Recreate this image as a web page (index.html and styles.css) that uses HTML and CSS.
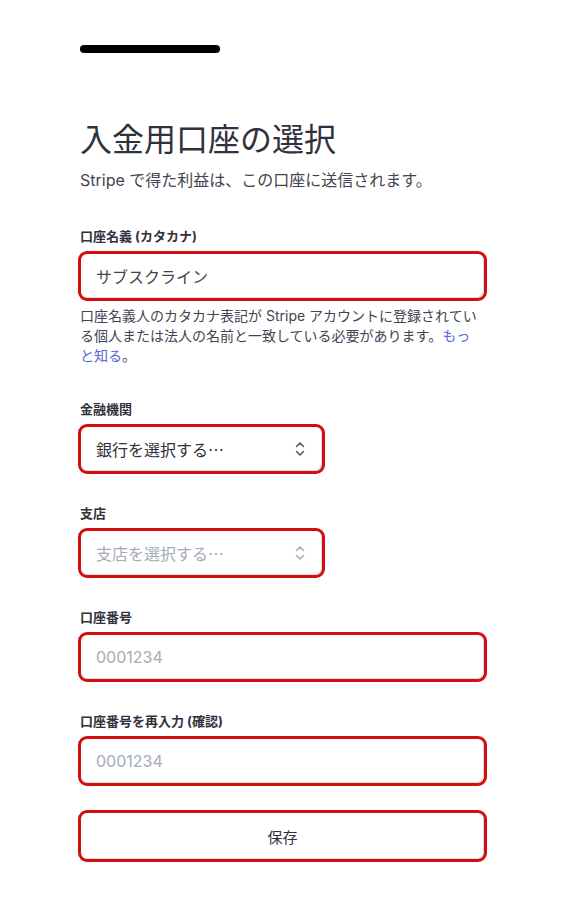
FILE: index.html
```html
<!DOCTYPE html>
<html lang="ja">
<head>
  <meta charset="utf-8">
  <title>入金用口座の選択</title>
  <meta name="viewport" content="width=device-width, initial-scale=1.0">
  <link rel="stylesheet" href="styles.css">
</head>
<body>
  <div class="container">
    <div class="top-bar"></div>

    <h1 class="title">入金用口座の選択</h1>
    <p class="subtitle">Stripe で得た利益は、この口座に送信されます。</p>

    <div class="field field-first">
      <label class="label">口座名義 (カタカナ)</label>
      <div class="control control-wide">
        <span class="value">サブスクライン</span>
      </div>
      <p class="help">口座名義人のカタカナ表記が Stripe アカウントに登録されている個人または法人の名前と一致している必要があります。<a href="#">もっと知る</a>。</p>
    </div>

    <div class="field">
      <label class="label">金融機関</label>
      <div class="control control-select">
        <span class="value">銀行を選択する…</span>
        <svg class="chevron" width="12" height="18" viewBox="0 0 12 18">
          <path d="M2.5 6.5 L6 3 L9.5 6.5" />
          <path d="M2.5 11.5 L6 15 L9.5 11.5" />
        </svg>
      </div>
    </div>

    <div class="field">
      <label class="label">支店</label>
      <div class="control control-select">
        <span class="placeholder">支店を選択する…</span>
        <svg class="chevron chevron-muted" width="12" height="18" viewBox="0 0 12 18">
          <path d="M2.5 6.5 L6 3 L9.5 6.5" />
          <path d="M2.5 11.5 L6 15 L9.5 11.5" />
        </svg>
      </div>
    </div>

    <div class="field">
      <label class="label">口座番号</label>
      <div class="control control-wide">
        <span class="placeholder">0001234</span>
      </div>
    </div>

    <div class="field">
      <label class="label">口座番号を再入力 (確認)</label>
      <div class="control control-wide">
        <span class="placeholder">0001234</span>
      </div>
    </div>

    <button class="save-button">保存</button>
  </div>
</body>
</html>
```

FILE: styles.css
```css
body {
  margin: 0;
  background-color: #ffffff;
  font-family: Inter, "Noto Sans CJK JP", sans-serif;
  color: #30313d;
}
.container {
  width: 409px;
  padding: 45px 0 40px 78px;
  display: flex;
  flex-direction: column;
}
.top-bar {
  width: 140px;
  height: 8px;
  margin-left: 2px;
  border-radius: 4px;
  background-color: #000000;
}
.title {
  margin: 68px 0 0 2px;
  font-size: 32px;
  font-weight: 400;
  line-height: 38px;
  color: #30313d;
}
.subtitle {
  margin: 11px 0 0 2px;
  font-size: 16px;
  line-height: 20px;
  color: #414552;
}
.field {
  display: flex;
  flex-direction: column;
  margin-top: 30px;
}
.field-first {
  margin-top: 37px;
}
.label {
  margin-left: 2px;
  margin-bottom: 6px;
  font-size: 13px;
  font-weight: 700;
  line-height: 18px;
  color: #30313d;
}
.control {
  height: 50px;
  box-sizing: border-box;
  border: 3px solid #d40d0d;
  border-radius: 9px;
  box-shadow: inset -1px -1px 0 #dcdde2;
  padding: 0 14px 0 15px;
  display: flex;
  align-items: center;
  font-size: 16px;
  background-color: #ffffff;
}
.control-wide {
  width: 409px;
}
.control-select {
  width: 247px;
  justify-content: space-between;
  padding-right: 16px;
  font-family: "Noto Sans CJK JP", sans-serif;
}
.value {
  color: #414552;
}
.control-select .value {
  color: #30313d;
}
.placeholder {
  color: #a3acba;
}
.chevron path {
  fill: none;
  stroke: #545969;
  stroke-width: 1.6;
  stroke-linecap: round;
  stroke-linejoin: round;
}
.chevron-muted path {
  stroke: #a3acba;
}
.help {
  max-width: 398px;
  margin: 5px 0 4px 2px;
  font-size: 14px;
  line-height: 20px;
  color: #414552;
}
.help a {
  color: #5469d4;
  text-decoration: none;
}
.save-button {
  margin-top: 24px;
  width: 409px;
  height: 52px;
  border: 3px solid #d40d0d;
  border-radius: 9px;
  box-shadow: inset -1px -1px 0 #dcdde2;
  background-color: #ffffff;
  font-family: Inter, "Noto Sans CJK JP", sans-serif;
  font-size: 15px;
  color: #30313d;
  cursor: pointer;
}
```
